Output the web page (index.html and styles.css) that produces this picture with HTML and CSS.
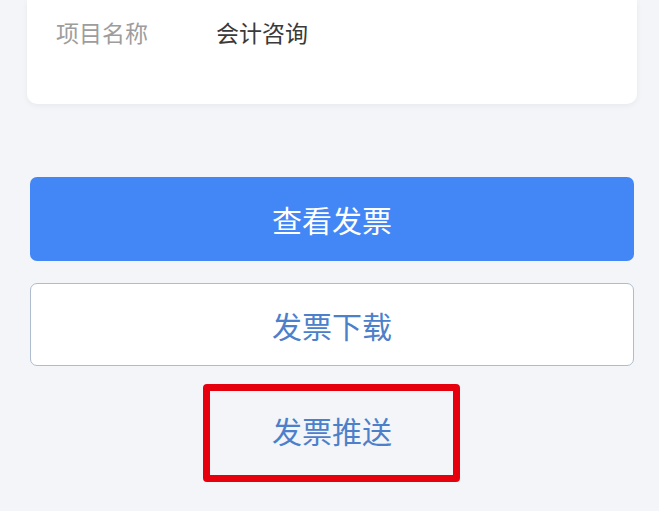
FILE: index.html
```html
<!doctype html>
<html lang="zh-CN">
<head>
  <meta charset="utf-8" />
  <meta name="viewport" content="width=device-width,initial-scale=1" />
  <title>发票详情</title>
  <link rel="stylesheet" href="styles.css">
</head>
<body>
  <div class="page">
    <div class="card">
      <div class="row">
        <span class="label">项目名称</span>
        <span class="value">会计咨询</span>
      </div>
    </div>

    <div class="actions">
      <button type="button" class="btn primary">查看发票</button>
      <button type="button" class="btn outline">发票下载</button>
      <button type="button" class="btn text">
        发票推送
        <span class="mark"></span>
      </button>
    </div>
  </div>
</body>
</html>
```

FILE: styles.css
```css
:root{--bg:#f3f5f9;--card:#ffffff;--accent:#4287f5;--link:#4c80ca;--muted:#9d9d9d}
body{font-family:"Noto Sans CJK SC","Noto Sans",sans-serif;margin:0;background:var(--bg);color:#333}
.page{height:511px;overflow:hidden}
.card{background:var(--card);margin:0 22px 0 27px;border-radius:0 0 10px 10px;box-shadow:0 2px 6px rgba(16,24,40,0.05);height:104px}
.row{display:flex;align-items:center;padding:14px 0 0 29px;height:36px}
.label{font-size:23px;color:var(--muted);width:160px}
.value{font-size:23px;color:#3a3a3a}
.actions{display:flex;flex-direction:column;gap:22px;margin:73px 25px 0 30px}
.btn{height:84px;border-radius:7px;font-family:inherit;font-size:30px;border:0;cursor:pointer;padding:0;position:relative}
.primary{background:var(--accent);color:#fff}
.outline{background:#fff;color:var(--link);border:1.5px solid #aebccd;height:83px}
.text{background:transparent;color:var(--link)}
.mark{position:absolute;left:173px;top:-4px;width:243px;height:84px;border:7px solid #e6000d;border-radius:4px}
```
